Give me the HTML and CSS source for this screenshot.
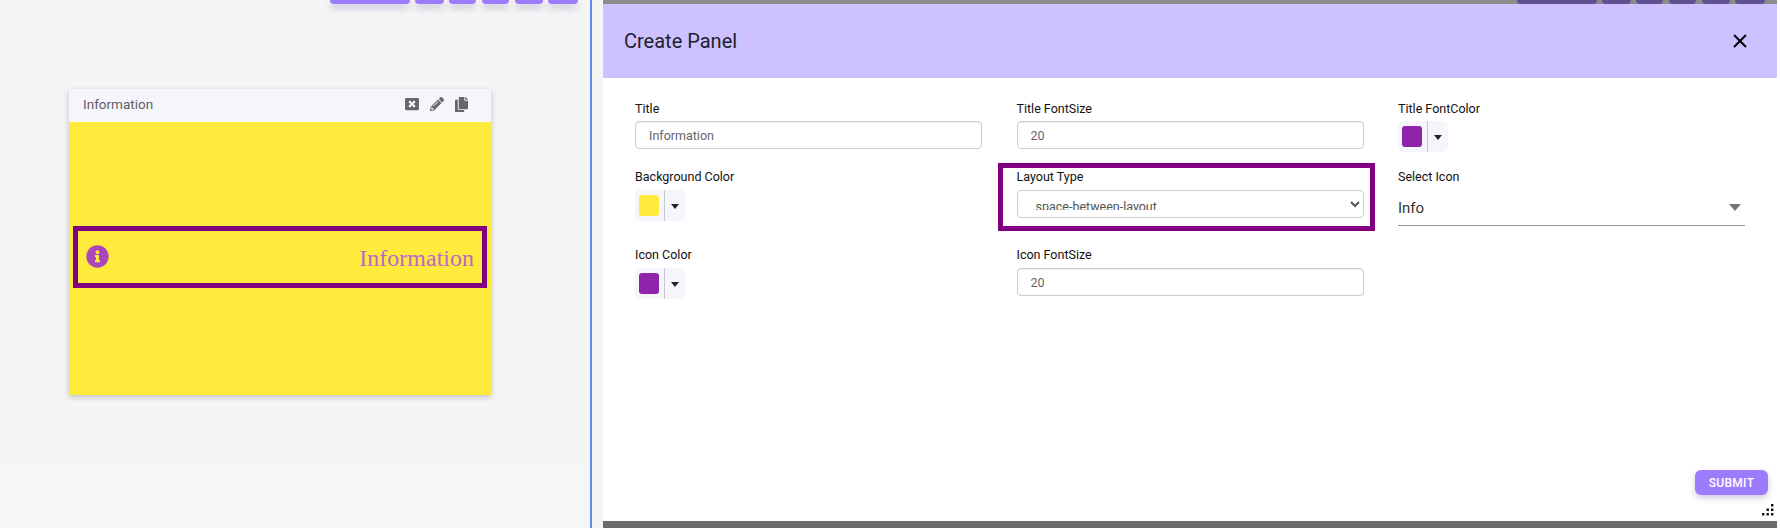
FILE: index.html
```html
<!DOCTYPE html>
<html lang="en">
<head>
    <meta charset="UTF-8">
    <title>Create Panel</title>
    <link rel="stylesheet" href="styles.css">
</head>
<body>
    <div class="canvas">
        <div class="toolbar">
            <span class="tool tool-wide"></span>
            <span class="tool tool-a"></span>
            <span class="tool tool-b"></span>
            <span class="tool tool-c"></span>
            <span class="tool tool-d"></span>
            <span class="tool tool-e"></span>
        </div>
        <div class="card">
            <div class="card-header">
                <span class="card-title">Information</span>
                <div class="card-icons">
                    <svg class="icon-close" viewBox="0 0 512 512"><path d="M464 32H48C21.5 32 0 53.5 0 80v352c0 26.5 21.5 48 48 48h416c26.5 0 48-21.5 48-48V80c0-26.5-21.5-48-48-48zm-83.6 290.5c4.8 4.8 4.8 12.6 0 17.4l-40.5 40.5c-4.8 4.8-12.6 4.8-17.4 0L256 313.3l-66.5 67.1c-4.8 4.8-12.6 4.8-17.4 0l-40.5-40.5c-4.8-4.8-4.8-12.6 0-17.4l67.1-66.5-67.1-66.5c-4.8-4.8-4.8-12.6 0-17.4l40.5-40.5c4.8-4.8 12.6-4.8 17.4 0l66.5 67.1 66.5-67.1c4.8-4.8 12.6-4.8 17.4 0l40.5 40.5c4.8 4.8 4.8 12.6 0 17.4L313.3 256l67.1 66.5z"/></svg>
                    <svg class="icon-pencil" viewBox="0 0 512 512"><path d="M497.9 142.1l-46.1 46.1c-4.7 4.7-12.3 4.7-17 0l-111-111c-4.7-4.7-4.7-12.3 0-17l46.1-46.1c18.7-18.7 49.1-18.7 67.9 0l60.1 60.1c18.8 18.7 18.8 49.1 0 67.9zM284.2 99.8L21.6 362.4.4 483.9c-2.9 16.4 11.4 30.6 27.8 27.8l121.5-21.3 262.6-262.6c4.7-4.7 4.7-12.3 0-17l-111-111c-4.8-4.7-12.4-4.7-17.1 0zM124.1 339.9c-5.5-5.5-5.5-14.3 0-19.8l154-154c5.5-5.5 14.3-5.5 19.8 0s5.5 14.3 0 19.8l-154 154c-5.5 5.5-14.3 5.5-19.8 0zM88 424h48v36.3l-64.5 11.3-31.1-31.1L51.7 376H88v48z"/></svg>
                    <svg class="icon-copy" viewBox="0 0 448 512"><path d="M320 448v40c0 13.255-10.745 24-24 24H24c-13.255 0-24-10.745-24-24V120c0-13.255 10.745-24 24-24h72v296c0 30.879 25.121 56 56 56h168zm0-344V0H152c-13.255 0-24 10.745-24 24v368c0 13.255 10.745 24 24 24h272c13.255 0 24-10.745 24-24V128H344c-13.2 0-24-10.8-24-24zm120.971-31.029L375.029 7.029A24 24 0 0 0 358.059 0H352v96h96v-6.059a24 24 0 0 0-7.029-16.97z"/></svg>
                </div>
            </div>
            <div class="card-body">
                <div class="info-row">
                    <svg class="icon-info" viewBox="0 0 512 512"><path d="M256 8C119.043 8 8 119.083 8 256c0 136.997 111.043 248 248 248s248-111.003 248-248C504 119.083 392.957 8 256 8zm0 110c23.196 0 42 18.804 42 42s-18.804 42-42 42-42-18.804-42-42 18.804-42 42-42zm56 254c0 6.627-5.373 12-12 12h-88c-6.627 0-12-5.373-12-12v-24c0-6.627 5.373-12 12-12h12v-64h-12c-6.627 0-12-5.373-12-12v-24c0-6.627 5.373-12 12-12h64c6.627 0 12 5.373 12 12v100h12c6.627 0 12 5.373 12 12v24z"/></svg>
                    <span class="info-title">Information</span>
                </div>
            </div>
        </div>
    </div>

    <div class="stage">
        <div class="backdrop">
            <div class="backdrop-top">
                <span class="tool tool-wide"></span>
                <span class="tool tool-a"></span>
                <span class="tool tool-b"></span>
                <span class="tool tool-c"></span>
                <span class="tool tool-d"></span>
                <span class="tool tool-e"></span>
            </div>
            <div class="modal">
                <div class="modal-header">
                    <h2 class="modal-title">Create Panel</h2>
                    <svg class="icon-x" viewBox="0 0 14 14"><path d="M1 1l12 12M13 1L1 13"/></svg>
                </div>
                <div class="form">
                    <div class="field field-top">
                        <label>Title</label>
                        <input class="text-input" type="text" value="Information">
                    </div>
                    <div class="field field-top">
                        <label>Title FontSize</label>
                        <input class="text-input" type="text" value="20">
                    </div>
                    <div class="field field-top">
                        <label>Title FontColor</label>
                        <div class="color-btn">
                            <span class="swatch swatch-purple"></span>
                            <span class="caret"></span>
                        </div>
                    </div>
                    <div class="field">
                        <label>Background Color</label>
                        <div class="color-btn">
                            <span class="swatch swatch-yellow"></span>
                            <span class="caret"></span>
                        </div>
                    </div>
                    <div class="field field-marked">
                        <label>Layout Type</label>
                        <select class="layout-select">
                            <option>space-between-layout</option>
                        </select>
                        <div class="marker"></div>
                    </div>
                    <div class="field">
                        <label>Select Icon</label>
                        <div class="icon-select">
                            <span>Info</span>
                            <span class="icon-select-arrow"></span>
                        </div>
                    </div>
                    <div class="field">
                        <label>Icon Color</label>
                        <div class="color-btn">
                            <span class="swatch swatch-purple"></span>
                            <span class="caret"></span>
                        </div>
                    </div>
                    <div class="field">
                        <label>Icon FontSize</label>
                        <input class="text-input" type="text" value="20">
                    </div>
                </div>
                <div class="modal-footer">
                    <button class="submit-btn" type="button">SUBMIT</button>
                </div>
                <svg class="resize-handle" viewBox="0 0 12 12"><path d="M9 0h2.400v2.400H9zM4.500 4.500h2.400v2.400H4.500zM9 4.500h2.400v2.400H9zM0 9h2.400v2.400H0zM4.500 9h2.400v2.400H4.500zM9 9h2.400v2.400H9z"/></svg>
            </div>
            <div class="backdrop-bottom"></div>
        </div>
    </div>
</body>
</html>
```

FILE: styles.css
```css
* {
    box-sizing: border-box;
}

body {
    font-family: Roboto, Arial, sans-serif;
    background-color: #fff;
    margin: 0;
    height: 528px;
    overflow: hidden;
    display: flex;
}

/* left side: dashboard with the preview card */
.canvas {
    width: 592px;
    height: 528px;
    flex-shrink: 0;
    background: linear-gradient(#f5f5f5 468px, #f5f6f8 468px);
    border-right: 2px solid #5f8cec;
}

.toolbar {
    display: flex;
    height: 4px;
    padding-left: 330px;
}

.tool {
    display: block;
    height: 4px;
    background-color: #9d7cfb;
    border-radius: 0 0 6px 6px;
    box-shadow: 0 4px 7px rgba(70, 60, 130, 0.32);
}

.tool-wide { width: 80px; margin-right: 5px; }
.tool-a { width: 29px; margin-right: 5px; }
.tool-b { width: 27px; margin-right: 6px; }
.tool-c { width: 27px; margin-right: 6px; }
.tool-d { width: 28px; margin-right: 5px; }
.tool-e { width: 30px; }

.card {
    width: 422px;
    height: 306px;
    margin: 85px 0 0 69px;
    border-radius: 3px 3px 0 0;
    box-shadow: 0 2px 6px rgba(0, 0, 0, 0.22);
    display: flex;
    flex-direction: column;
}

.card-header {
    height: 33px;
    flex-shrink: 0;
    background-color: #f6f5fb;
    display: flex;
    align-items: center;
    justify-content: space-between;
    padding: 0 23px 3px 14px;
}

.card-title {
    font-size: 13.500px;
    color: #5f5f63;
}

.card-icons {
    display: flex;
    align-items: center;
    gap: 11px;
    fill: #66666b;
}

.icon-close {
    width: 14px;
    height: 14px;
}

.icon-pencil {
    width: 14px;
    height: 14px;
}

.icon-copy {
    width: 13px;
    height: 15px;
}

.card-body {
    flex: 1;
    background-color: #ffeb3b;
    display: flex;
    flex-direction: column;
    justify-content: center;
    padding: 0 4px 4px;
}

.info-row {
    height: 62px;
    border: 5px solid #800080;
    display: flex;
    align-items: center;
    justify-content: space-between;
    padding: 0 8px;
}

.icon-info {
    width: 23px;
    height: 23px;
    fill: #ab47bc;
}

.info-title {
    font-family: "Liberation Serif", serif;
    font-size: 24px;
    color: #ba68c8;
    padding-top: 3px;
}

/* right side: the dialog over its backdrop */
.stage {
    flex: 1;
    border-left: 11px solid #f5f5f5;
    padding-right: 3px;
}

.backdrop {
    height: 528px;
    display: flex;
    flex-direction: column;
}

.backdrop-top {
    height: 4px;
    flex-shrink: 0;
    background-color: #8c8c8c;
    display: flex;
    padding-left: 914px;
}

.backdrop-top .tool {
    background-color: #5f5091;
    box-shadow: none;
}

.backdrop-bottom {
    height: 7px;
    flex-shrink: 0;
    background-color: #6b6b6b;
}

.modal {
    flex: 1;
    background-color: #fff;
    display: flex;
    flex-direction: column;
    position: relative;
}

.modal-header {
    height: 74px;
    flex-shrink: 0;
    background-color: #cdc1ff;
    display: flex;
    align-items: center;
    justify-content: space-between;
    padding: 0 30px 1px 21px;
}

.modal-title {
    margin: 0;
    font-size: 20px;
    font-weight: 400;
    color: #1f1f2b;
}

.icon-x {
    width: 14px;
    height: 14px;
    fill: none;
    stroke: #000;
    stroke-width: 2;
}

.form {
    display: grid;
    grid-template-columns: repeat(3, 347px);
    grid-template-rows: 68px 78px auto;
    column-gap: 34.5px;
    padding: 23px 32px 0;
}

.field label {
    display: block;
    height: 16px;
    line-height: 16px;
    margin-bottom: 5px;
    font-size: 12.500px;
    font-weight: 400;
    color: #111;
}

.field-top label {
    margin-bottom: 4px;
}

.field-marked {
    position: relative;
}

.marker {
    position: absolute;
    left: -19px;
    right: -11px;
    top: -6px;
    height: 68px;
    border: 5px solid #800080;
    pointer-events: none;
}

.text-input {
    display: block;
    width: 100%;
    height: 28px;
    padding: 0 13px;
    border: 1px solid #ccc;
    border-radius: 4px;
    box-shadow: inset 0 1px 1px rgba(0, 0, 0, 0.07);
    font-family: inherit;
    font-size: 12.500px;
    color: #666;
}

.layout-select {
    display: block;
    width: 100%;
    height: 28px;
    padding: 7px 4px 7px 14px;
    border: 1px solid #ccc;
    border-radius: 4px;
    background-color: #fff;
    font-family: inherit;
    font-size: 12.500px;
    color: #555;
}

.color-btn {
    width: 50px;
    height: 31px;
    background-color: #f6f5fb;
    border-radius: 5px;
    display: flex;
    align-items: center;
    padding-left: 4px;
}

.swatch {
    width: 20px;
    height: 21px;
    border-radius: 3px;
}

.swatch-yellow {
    background-color: #ffeb3b;
}

.swatch-purple {
    background-color: #8e24aa;
}

.caret {
    align-self: stretch;
    width: 21px;
    margin-left: 5px;
    border-left: 1px solid #c9c8cf;
    position: relative;
}

.caret::after {
    content: "";
    position: absolute;
    left: 6px;
    top: 14px;
    border-top: 5px solid #222;
    border-left: 4.500px solid transparent;
    border-right: 4.500px solid transparent;
}

.icon-select {
    height: 36px;
    border-bottom: 1px solid #949494;
    display: flex;
    align-items: center;
    justify-content: space-between;
    padding-right: 4px;
    font-size: 15px;
    color: #333;
}

.icon-select-arrow {
    border-top: 7px solid #757575;
    border-left: 6px solid transparent;
    border-right: 6px solid transparent;
}

.modal-footer {
    margin-top: auto;
    display: flex;
    justify-content: flex-end;
    padding: 0 9px 26px 0;
}

.submit-btn {
    width: 73px;
    height: 25px;
    padding: 0;
    border: none;
    border-radius: 6px;
    background-color: #9d7cfb;
    box-shadow: 0 3px 6px rgba(70, 60, 130, 0.25);
    font-family: inherit;
    font-size: 12px;
    font-weight: 500;
    letter-spacing: 0.3px;
    color: #fff;
}

.resize-handle {
    position: absolute;
    right: 3px;
    bottom: 5px;
    width: 12px;
    height: 12px;
    fill: #111;
}
```
